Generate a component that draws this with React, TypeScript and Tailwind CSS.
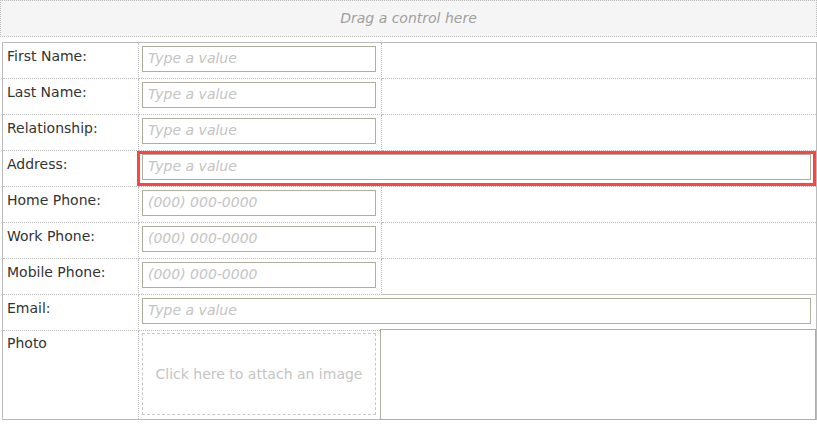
import React from "react";

type RowProps = {
  label: string;
  placeholder: string;
  wide?: boolean;
  selected?: boolean;
  solidEnd?: boolean;
};

function Row({ label, placeholder, wide, selected, solidEnd }: RowProps) {
  return (
    <div className="flex h-[36px]">
      {/* label */}
      <div className="w-[136px] shrink-0 border-r border-b border-dotted border-[#bbb] pl-[4px] pt-[5px] text-[14px] leading-[17px] text-[#333]">
        {label}
      </div>
      {wide ? (
        <div className="relative flex-1 border-b border-dotted border-[#bbb]">
          <input
            readOnly
            placeholder={placeholder}
            className="ml-[3px] mt-[3px] block h-[26px] w-[669px] border border-[#b0ae9c] bg-white pl-[5px] pb-[2px] text-[14px] italic outline-none placeholder:text-[#c4c4c4]"
          />
          {selected && (
            <div className="absolute -left-[2px] top-0 right-0 bottom-0 border-[3px] border-[#ff4242]" />
          )}
        </div>
      ) : (
        <>
          <div className="w-[243px] shrink-0 border-r border-b border-dotted border-[#bbb]">
            <input
              readOnly
              placeholder={placeholder}
              className="ml-[3px] mt-[3px] block h-[26px] w-[234px] border border-[#b0ae9c] bg-white pl-[5px] pb-[2px] text-[14px] italic outline-none placeholder:text-[#c4c4c4]"
            />
          </div>
          <div
            className={
              solidEnd
                ? "flex-1 border-b border-solid border-[#bbb]"
                : "flex-1 border-b border-dotted border-[#bbb]"
            }
          />
        </>
      )}
    </div>
  );
}

export default function App() {
  return (
    <div className="w-[817px] h-[429px] bg-white font-['DejaVu_Sans',sans-serif] overflow-hidden">
      {/* drop zone */}
      <div className="h-[37px] w-[817px] border border-dotted border-[#bbb] bg-[#f5f5f5] flex items-center justify-center text-[14px] italic text-[#a0a0a0]">
        Drag a control here
      </div>

      {/* form table */}
      <div className="mt-[5px] ml-[2px] w-[815px] h-[378px] border border-[#bbb] flex flex-col">
        <Row label="First Name:" placeholder="Type a value" />
        <Row label="Last Name:" placeholder="Type a value" />
        <Row label="Relationship:" placeholder="Type a value" />
        <Row label="Address:" placeholder="Type a value" wide selected />
        <Row label="Home Phone:" placeholder="(000) 000-0000" />
        <Row label="Work Phone:" placeholder="(000) 000-0000" />
        <Row label="Mobile Phone:" placeholder="(000) 000-0000" solidEnd />
        <Row label="Email:" placeholder="Type a value" wide />

        {/* photo row */}
        <div className="flex flex-1">
          <div className="w-[136px] shrink-0 border-r border-dotted border-[#bbb] pl-[4px] pt-[4px] text-[14px] leading-[17px] text-[#333]">
            Photo
          </div>
          <div className="w-[241px] shrink-0 pl-[3px] pt-[2px]">
            <div className="w-[234px] h-[82px] border border-dashed border-[#c8c8c8] flex items-center justify-center text-[14px] text-[#c4c4c4]">
              Click here to attach an image
            </div>
          </div>
          <div className="relative flex-1 -mt-[2px] -mb-[1px] border border-[#b0ae9c] bg-white" />
        </div>
      </div>
    </div>
  );
}
